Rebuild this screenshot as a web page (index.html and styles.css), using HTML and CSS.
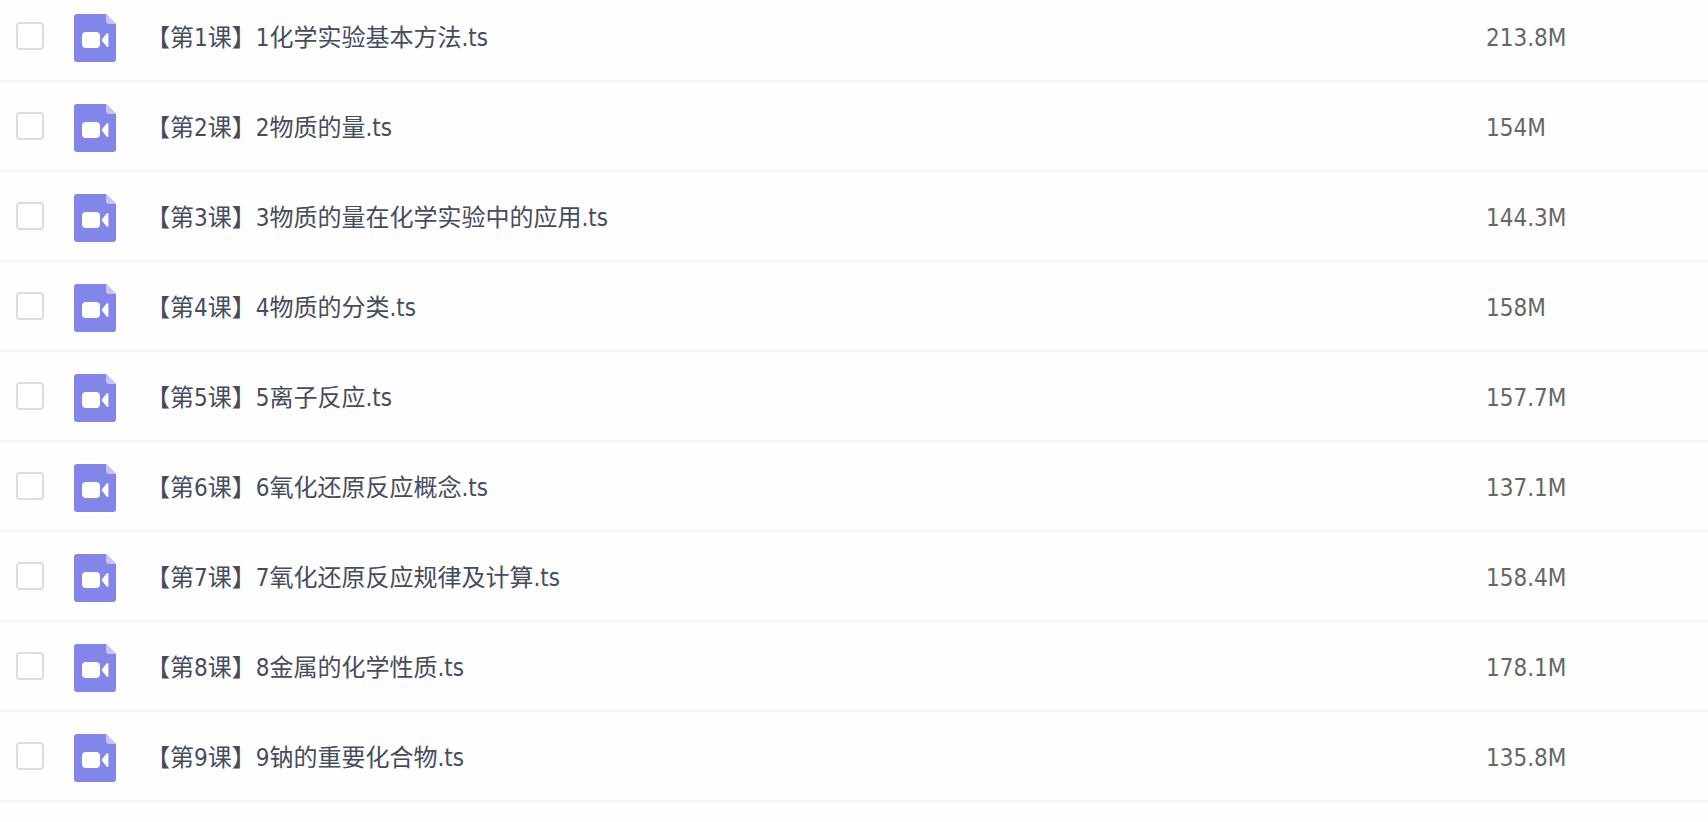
FILE: index.html
```html
<!DOCTYPE html>
<html lang="zh-CN">
<head>
    <meta charset="UTF-8">
    <meta name="viewport" content="width=device-width, initial-scale=1.0">
    <title>文件列表</title>
    <link rel="stylesheet" href="styles.css">
</head>
<body>
    <svg class="sprite" aria-hidden="true">
        <symbol id="icon-video" viewBox="0 0 42 48">
            <path fill="#8286e8" d="M3 0H32L42 10V45a3 3 0 0 1-3 3H3a3 3 0 0 1-3-3V3a3 3 0 0 1 3-3z"/>
            <path fill="#c3c5f5" d="M32 0L42 10H35a3 3 0 0 1-3-3z"/>
            <rect x="8" y="18" width="18" height="16" rx="4" fill="#fff"/>
            <path fill="#fff" d="M28 25.2L32.6 19.6Q34.4 18 34.4 20V32Q34.4 34 32.6 32.4L28 26.8Q27.4 26 28 25.2z"/>
        </symbol>
    </svg>

    <table class="file-list">
        <tbody>
            <tr>
                <td class="check"><input type="checkbox" id="file1"></td>
                <td class="icon"><svg><use href="#icon-video"/></svg></td>
                <td class="name"><label for="file1">【第1课】1化学实验基本方法.ts</label></td>
                <td class="size">213.8M</td>
            </tr>
            <tr>
                <td class="check"><input type="checkbox" id="file2"></td>
                <td class="icon"><svg><use href="#icon-video"/></svg></td>
                <td class="name"><label for="file2">【第2课】2物质的量.ts</label></td>
                <td class="size">154M</td>
            </tr>
            <tr>
                <td class="check"><input type="checkbox" id="file3"></td>
                <td class="icon"><svg><use href="#icon-video"/></svg></td>
                <td class="name"><label for="file3">【第3课】3物质的量在化学实验中的应用.ts</label></td>
                <td class="size">144.3M</td>
            </tr>
            <tr>
                <td class="check"><input type="checkbox" id="file4"></td>
                <td class="icon"><svg><use href="#icon-video"/></svg></td>
                <td class="name"><label for="file4">【第4课】4物质的分类.ts</label></td>
                <td class="size">158M</td>
            </tr>
            <tr>
                <td class="check"><input type="checkbox" id="file5"></td>
                <td class="icon"><svg><use href="#icon-video"/></svg></td>
                <td class="name"><label for="file5">【第5课】5离子反应.ts</label></td>
                <td class="size">157.7M</td>
            </tr>
            <tr>
                <td class="check"><input type="checkbox" id="file6"></td>
                <td class="icon"><svg><use href="#icon-video"/></svg></td>
                <td class="name"><label for="file6">【第6课】6氧化还原反应概念.ts</label></td>
                <td class="size">137.1M</td>
            </tr>
            <tr>
                <td class="check"><input type="checkbox" id="file7"></td>
                <td class="icon"><svg><use href="#icon-video"/></svg></td>
                <td class="name"><label for="file7">【第7课】7氧化还原反应规律及计算.ts</label></td>
                <td class="size">158.4M</td>
            </tr>
            <tr>
                <td class="check"><input type="checkbox" id="file8"></td>
                <td class="icon"><svg><use href="#icon-video"/></svg></td>
                <td class="name"><label for="file8">【第8课】8金属的化学性质.ts</label></td>
                <td class="size">178.1M</td>
            </tr>
            <tr>
                <td class="check"><input type="checkbox" id="file9"></td>
                <td class="icon"><svg><use href="#icon-video"/></svg></td>
                <td class="name"><label for="file9">【第9课】9钠的重要化合物.ts</label></td>
                <td class="size">135.8M</td>
            </tr>
        </tbody>
    </table>
</body>
</html>
```

FILE: styles.css
```css
body {
    margin: 0;
    background-color: #fefefe;
    font-family: "DejaVu Sans Condensed", "Noto Sans CJK SC", sans-serif;
    font-size: 24px;
    line-height: 32px;
}
.sprite {
    display: none;
}
.file-list {
    width: 100%;
    margin-top: -8px;
    border-collapse: separate;
    border-spacing: 0;
    table-layout: fixed;
}
.file-list td {
    height: 84px;
    padding: 4px 0 0;
    border-bottom: 2px solid #f3f5f8;
    vertical-align: middle;
}
.file-list .check {
    width: 58px;
    height: 88px;
    padding: 0 0 0 16px;
}
.check input {
    appearance: none;
    display: block;
    box-sizing: border-box;
    width: 28px;
    height: 28px;
    margin: 0;
    border: 2px solid #dcdde4;
    border-radius: 4px;
    background-color: #fff;
    cursor: pointer;
}
.check input:checked {
    background-color: #8286e8;
    border-color: #8286e8;
}
.file-list .icon {
    width: 72px;
}
.icon svg {
    display: block;
    width: 42px;
    height: 48px;
}
.name {
    color: #454c60;
    white-space: nowrap;
    overflow: hidden;
    text-overflow: ellipsis;
}
.file-list .size {
    width: 13%;
    color: #666;
}
```
